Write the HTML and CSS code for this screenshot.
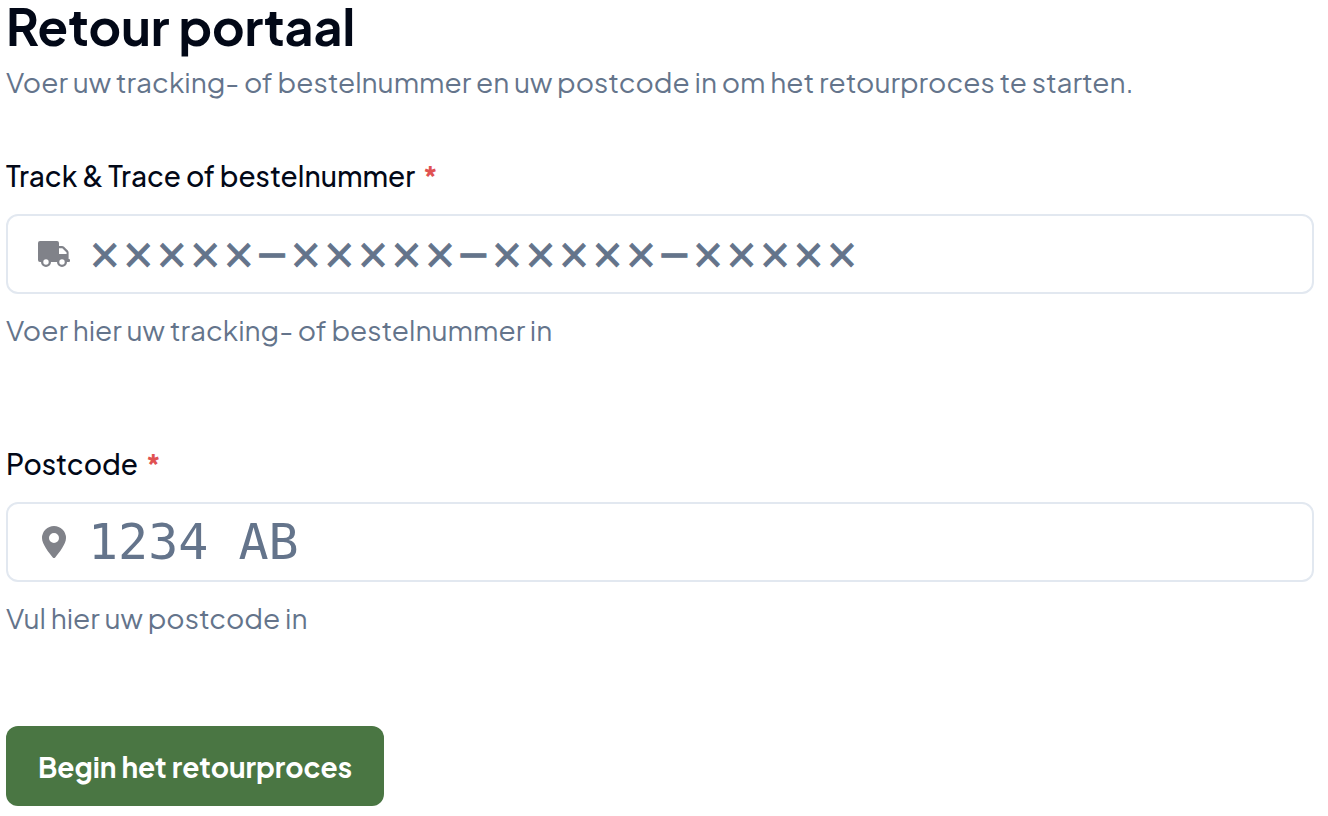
FILE: index.html
```html
<!DOCTYPE html>
<html lang="nl">
<head>
  <meta charset="UTF-8">
  <meta name="viewport" content="width=device-width, initial-scale=1.0">
  <title>Retour portaal</title>
  <link rel="stylesheet" href="styles.css">
</head>
<body>
  <main class="portal">
    <div class="header">
      <h1>Retour portaal</h1>
      <p>Voer uw tracking- of bestelnummer en uw postcode in om het retourproces te starten.</p>
    </div>
    <form class="return-form">
      <div class="field">
        <label for="tracking">Track &amp; Trace of bestelnummer <span class="required">*</span></label>
        <div class="input-box">
          <svg class="icon" viewBox="0 0 32 32" aria-hidden="true">
            <path fill-rule="evenodd" d="M2 3H19Q21 3 21 5V8H24Q25.200 8 26 8.800L29.800 12.600Q30.600 13.400 30.600 14.600V21H31Q32 21 32 22V23Q32 24 31 24H29A5 5 0 0 1 19 24H13A5 5 0 0 1 3 24H2Q0 24 0 22V5Q0 3 2 3ZM21 10.300V16H28.600V14.600L24.300 10.300ZM8 21.300A2.700 2.700 0 1 0 8 26.700A2.700 2.700 0 1 0 8 21.300ZM24 21.300A2.700 2.700 0 1 0 24 26.700A2.700 2.700 0 1 0 24 21.300Z"/>
          </svg>
          <input class="tracking" type="text" id="tracking" placeholder="×××××−×××××−×××××−×××××" required>
        </div>
        <p class="hint">Voer hier uw tracking- of bestelnummer in</p>
      </div>
      <div class="field">
        <label for="postcode">Postcode <span class="required">*</span></label>
        <div class="input-box">
          <svg class="icon" viewBox="0 0 32 32" aria-hidden="true">
            <path fill-rule="evenodd" d="M16 0A12 12 0 0 1 28 12C28 18 21 27 17.200 31.400Q16 32.600 14.800 31.400C11 27 4 18 4 12A12 12 0 0 1 16 0ZM16 7A5 5 0 1 0 16 17A5 5 0 1 0 16 7Z"/>
          </svg>
          <input class="postcode" type="text" id="postcode" placeholder="1234 AB" required>
        </div>
        <p class="hint">Vul hier uw postcode in</p>
      </div>
      <button class="submit" type="submit">Begin het retourproces</button>
    </form>
  </main>
</body>
</html>
```
FILE: styles.css
```css
body {
  margin: 0;
  background: #fff;
  color: #020817;
  font-family: "Plus Jakarta Sans", Inter, sans-serif;
  font-size: 28px;
  line-height: 40px;
}
.portal {
  padding: 0 14px 10px 6px;
}
.header {
  margin-bottom: 58px;
}
h1 {
  margin: 0;
  font-size: 50px;
  line-height: 52px;
  font-weight: 700;
}
p {
  margin: 0;
  color: #64748b;
}
.header p {
  padding-top: 10px;
}
.return-form {
  display: flex;
  flex-direction: column;
  align-items: flex-start;
}
.field {
  width: 100%;
}
.field + .field {
  margin: 98px 0 88px;
}
label {
  display: block;
  line-height: 32px;
  font-weight: 500;
}
.required {
  margin-left: 3px;
  color: #e05252;
  font-weight: 700;
}
.input-box {
  display: flex;
  align-items: center;
  gap: 18px;
  height: 80px;
  margin: 22px 0 16px;
  padding: 0 30px;
  box-sizing: border-box;
  border: 2px solid #e2e8f0;
  border-radius: 12px;
}
.icon {
  width: 32px;
  height: 32px;
  flex: none;
  fill: #808289;
}
input {
  flex: 1;
  min-width: 0;
  height: 76px;
  padding: 0;
  border: none;
  outline: none;
  background: transparent;
  color: #020817;
}
input::placeholder {
  color: #64748b;
  opacity: 1;
}
.tracking {
  font-family: "DejaVu Sans", sans-serif;
  font-size: 40px;
  -webkit-text-stroke: 1px #64748b;
}
.postcode {
  font-family: "DejaVu Sans Mono", monospace;
  font-size: 50px;
}
.submit {
  height: 80px;
  padding: 0 32px;
  border: none;
  border-radius: 12px;
  background: #4a7643;
  color: #fff;
  font-family: inherit;
  font-size: 28px;
  font-weight: 700;
  cursor: pointer;
}
.submit:hover {
  background: #406639;
}
```
